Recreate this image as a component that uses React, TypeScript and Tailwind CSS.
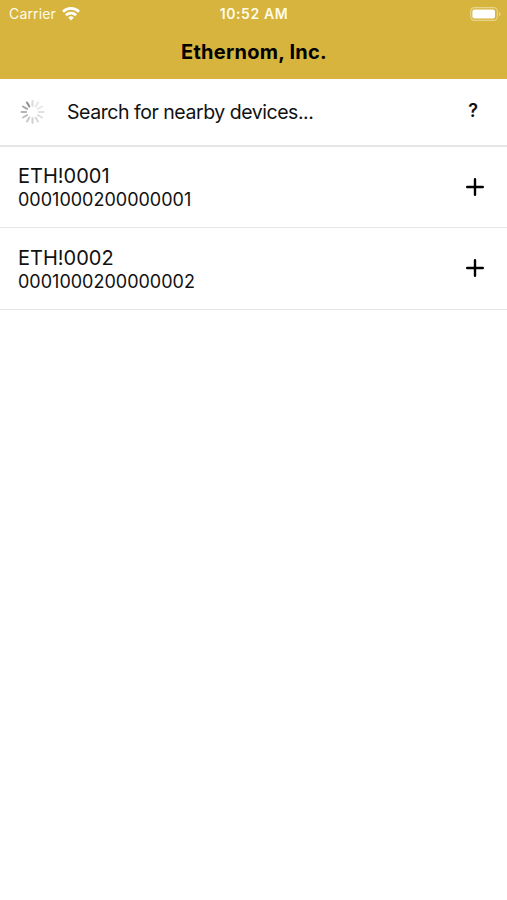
import type { ReactNode } from 'react';

interface Device {
  name: string;
  serial: string;
}

const devices: Device[] = [
  { name: 'ETH!0001', serial: '0001000200000001' },
  { name: 'ETH!0002', serial: '0001000200000002' },
];

// one grey per spoke, clockwise from the top
const spokes = ['#dadada', '#e6e6e6', '#e8e8e8', '#e0e0e0', '#dedede', '#d8d8d8', '#d0d0d0', '#c9c9c9', '#c0c0c0', '#b4b4b4', '#a6a6a6', '#8f8f8f'];

function Spinner() {
  return (
    <svg width="25" height="24" viewBox="-12.5 -12 25 24">
      {spokes.map((color, i) => (
        <line
          key={i}
          y1="-6.3"
          y2="-11"
          stroke={color}
          strokeWidth="2"
          strokeLinecap="round"
          transform={`rotate(${i * 30})`}
        />
      ))}
    </svg>
  );
}

function WifiIcon() {
  return (
    <svg width="18" height="14" viewBox="0 0 18 14" fill="none" stroke="white" strokeWidth="2.6">
      <path d="M1 4.7a11.4 11.4 0 0 1 16 0" />
      <path d="M3.9 8.2a7.3 7.3 0 0 1 10.2 0" />
      <path d="M9 13.4 6.2 10.6a4 4 0 0 1 5.6 0z" fill="white" stroke="none" />
    </svg>
  );
}

function BatteryIcon() {
  return (
    <svg width="32" height="14" viewBox="0 0 32 14">
      <rect x="0.7" y="0.7" width="26.6" height="12.6" rx="3.6" fill="none" stroke="#e8d48c" strokeWidth="1.2" />
      <rect x="2.4" y="2.4" width="22.6" height="9" rx="2" fill="white" />
      <path d="M29 5v4c1-.3 1.6-1.1 1.6-2S30 5.3 29 5z" fill="#e8d48c" />
    </svg>
  );
}

function StatusBar() {
  return (
    <div className="grid grid-cols-3 items-center h-[27px] px-[7px] text-[14px] text-[#fffbea]">
      <div className="flex items-center gap-[6px] pl-[2px]">
        <span className="tracking-[0.15px]">Carrier</span>
        <WifiIcon />
      </div>
      <span className="pl-px text-center font-semibold tracking-[0.6px]">10:52 AM</span>
      <div className="flex justify-end -mr-[2px]">
        <BatteryIcon />
      </div>
    </div>
  );
}

function Row({ className, children }: { className: string; children: ReactNode }) {
  return <div className={`flex items-center justify-between border-[#e6e6e6] ${className}`}>{children}</div>;
}

export default function App() {
  return (
    <div className="min-h-screen bg-white text-[#111] font-['Inter',sans-serif]">
      <header className="h-[79px] bg-[#d6b43d]">
        <StatusBar />
        <h1 className="h-[50px] pl-px text-center text-[20px] leading-[50px] font-bold tracking-[0.25px] text-black">
          Ethernom, Inc.
        </h1>
      </header>

      <Row className="h-[68px] border-b-2 pl-5 pr-[29px]">
        <div className="flex items-center gap-[22px]">
          <Spinner />
          <span className="pt-px text-[19.5px] tracking-[-0.46px]">Search for nearby devices...</span>
        </div>
        <button className="pb-1 text-[18px] font-semibold">?</button>
      </Row>

      {devices.map((device) => (
        <Row key={device.serial} className="h-[81.3px] border-b pl-[18px] pr-[23px]">
          <div className="pt-[1.2px]">
            <div className="text-[20px] leading-6">{device.name}</div>
            <div className="text-[18px] leading-[23px]">{device.serial}</div>
          </div>
          <button>
            <svg width="18" height="18" viewBox="0 0 18 18" stroke="black" strokeWidth="2.4" strokeLinecap="round">
              <path d="M9 1.2v15.6M1.2 9h15.6" />
            </svg>
          </button>
        </Row>
      ))}
    </div>
  );
}
